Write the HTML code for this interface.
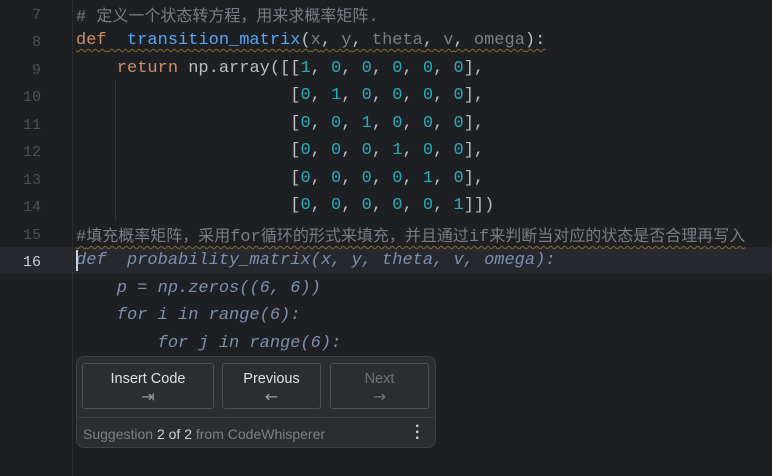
<!DOCTYPE html>
<html><head><meta charset="utf-8"><style>
body{margin:0;width:772px;height:476px;background:#1e1f22;overflow:hidden;position:relative;font-family:"Liberation Mono","Noto Sans CJK SC",monospace;font-size:17px;}
.ln{position:absolute;left:0;width:41px;text-align:right;color:#4b5059;font-size:15px;line-height:20px;margin-top:2px}
.c{position:absolute;left:76px;white-space:pre;color:#bcbec4;line-height:20px;}
.sep{position:absolute;left:72px;top:0;width:1px;height:476px;background:#2b2d30;}
.hl{position:absolute;left:0;top:247px;width:772px;height:27px;background:#26282e;}
.cm{color:#7a7e85}.kw{color:#cf8e6d}.fn{color:#56a8f5}.pa{color:#7c7f86}.n{color:#2aacb8}
.zh{font-family:"Noto Sans CJK SC",sans-serif;font-size:16px}
.g{color:#7f90ad;font-style:italic}
.wv{text-decoration:underline wavy #8a6a2a;text-decoration-thickness:1px;text-underline-offset:4px}
.guide{position:absolute;left:115px;top:80px;width:1px;height:140px;background:#34363b}
.pop{position:absolute;left:76px;top:356px;width:358px;height:90px;background:#2b2d30;border:1px solid #3e4044;border-radius:8px;font-family:"Liberation Sans",sans-serif;}
.b{position:absolute;top:6px;height:46px;border:1px solid #4e5157;border-radius:3px;text-align:center;color:#dfe1e5;font-size:14.5px;box-sizing:border-box;padding-top:6px;line-height:18px}
.b span{display:block;color:#9a9da3;font-size:16px;font-family:"DejaVu Sans",sans-serif}
.ft{position:absolute;left:0;top:60px;width:358px;border-top:1px solid #3c3f43;}
</style></head><body>
<div class="hl"></div>
<div class="sep"></div>
<div class="guide"></div>
<div class="ln" style="top:4px">7</div>
<div class="ln" style="top:31px">8</div>
<div class="ln" style="top:59px">9</div>
<div class="ln" style="top:86px">10</div>
<div class="ln" style="top:114px">11</div>
<div class="ln" style="top:141px">12</div>
<div class="ln" style="top:169px">13</div>
<div class="ln" style="top:196px">14</div>
<div class="ln" style="top:224px">15</div>
<div class="ln" style="top:251px;color:#d0d2d6">16</div>
<div class="c cm" style="top:4px"># <span class="zh">定义一个状态转方程，用来求概率矩阵</span>.</div>
<div class="c" style="top:31px"><span class="wv"><span class="kw">def</span>  <span class="fn">transition_matrix</span>(<span class="pa">x</span>, <span class="pa">y</span>, <span class="pa">theta</span>, <span class="pa">v</span>, <span class="pa">omega</span>):</span></div>
<div class="c" style="top:59px">    <span class="kw">return</span> np.array([[<span class="n">1</span>, <span class="n">0</span>, <span class="n">0</span>, <span class="n">0</span>, <span class="n">0</span>, <span class="n">0</span>],</div>
<div class="c" style="top:86px">                     [<span class="n">0</span>, <span class="n">1</span>, <span class="n">0</span>, <span class="n">0</span>, <span class="n">0</span>, <span class="n">0</span>],</div>
<div class="c" style="top:114px">                     [<span class="n">0</span>, <span class="n">0</span>, <span class="n">1</span>, <span class="n">0</span>, <span class="n">0</span>, <span class="n">0</span>],</div>
<div class="c" style="top:141px">                     [<span class="n">0</span>, <span class="n">0</span>, <span class="n">0</span>, <span class="n">1</span>, <span class="n">0</span>, <span class="n">0</span>],</div>
<div class="c" style="top:169px">                     [<span class="n">0</span>, <span class="n">0</span>, <span class="n">0</span>, <span class="n">0</span>, <span class="n">1</span>, <span class="n">0</span>],</div>
<div class="c" style="top:196px">                     [<span class="n">0</span>, <span class="n">0</span>, <span class="n">0</span>, <span class="n">0</span>, <span class="n">0</span>, <span class="n">1</span>]])</div>
<div class="c cm" style="top:224px"><span class="wv">#<span class="zh">填充概率矩阵，采用</span>for<span class="zh">循环的形式来填充，并且通过</span>if<span class="zh">来判断当对应的状态是否合理再写入</span></span></div>
<div class="c g" style="top:251px">def  probability_matrix(x, y, theta, v, omega):</div>
<div style="position:absolute;left:76px;top:250px;width:2px;height:21px;background:#ced0d6"></div>
<div class="c g" style="top:279px">    p = np.zeros((6, 6))</div>
<div class="c g" style="top:306px">    for i in range(6):</div>
<div class="c g" style="top:334px">        for j in range(6):</div>
<div class="pop">
<div class="b" style="left:5px;width:132px">Insert Code<span>⇥</span></div>
<div class="b" style="left:145px;width:99px">Previous<span>←</span></div>
<div class="b" style="left:253px;width:99px;color:#6f737a">Next<span style="color:#6f737a">→</span></div>
<div class="ft"></div>
<div style="position:absolute;left:6px;top:69px;font-size:14px;color:#7d8087">Suggestion <span style="color:#cfd1d5">2 of 2</span> from CodeWhisperer</div>
<div style="position:absolute;left:338px;top:67px;font-size:16px;color:#cfd1d5;line-height:6px;font-weight:bold">·<br>·<br>·</div>
</div>
</body></html>
